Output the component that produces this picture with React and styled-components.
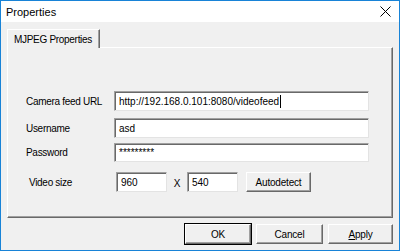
import styled, { createGlobalStyle } from "styled-components";

const Global = createGlobalStyle`
  html, body {
    margin: 0;
    padding: 0;
    background: #ffffff;
  }
  * {
    box-sizing: border-box;
  }
`;

const Window = styled.div`
  width: 400px;
  height: 251px;
  border: 1px solid #1883d7;
  background: #f0f0f0;
  display: flex;
  flex-direction: column;
  font-family: "Liberation Sans", Arial, sans-serif;
  font-size: 10px;
  color: #000;
`;

const TitleBar = styled.div`
  height: 21px;
  background: #ffffff;
  display: flex;
  align-items: center;
  justify-content: space-between;
  padding: 0 8px 0 5px;
`;

const Title = styled.span`
  font-size: 11px;
  color: #000;
`;

const Body = styled.div`
  flex: 1;
  display: flex;
  flex-direction: column;
  padding: 7px 6px 0 6px;
`;

const TabStrip = styled.div`
  display: flex;
  height: 18px;
  position: relative;
  z-index: 1;
`;

const Tab = styled.div`
  height: 19px;
  padding: 0 7px 0 6px;
  display: flex;
  align-items: center;
  background: #f0f0f0;
  border-top: 1px solid #ffffff;
  border-left: 1px solid #ffffff;
  border-right: 1px solid #696969;
  box-shadow: inset -1px 0 0 #a0a0a0;
  letter-spacing: -0.3px;
  white-space: nowrap;
`;

const Panel = styled.div`
  height: 171px;
  border-top: 1px solid #ffffff;
  border-left: 1px solid #ffffff;
  border-right: 1px solid #696969;
  border-bottom: 1px solid #696969;
  box-shadow: inset -1px -1px 0 #a0a0a0;
  display: flex;
  flex-direction: column;
  padding: 0 0 0 18px;
`;

const Row = styled.div`
  display: flex;
  align-items: center;
  margin-top: ${(p) => p.$top}px;
  padding-left: ${(p) => p.$indent || 0}px;
`;

const Label = styled.div`
  width: ${(p) => p.$w}px;
  flex-shrink: 0;
  white-space: nowrap;
  letter-spacing: -0.3px;
`;

const Field = styled.div`
  width: ${(p) => p.$w}px;
  height: ${(p) => p.$h || 20}px;
  flex-shrink: 0;
  background: #ffffff;
  border-top: 1px solid #a0a0a0;
  border-left: 1px solid #a0a0a0;
  border-right: 1px solid #e3e3e3;
  border-bottom: 1px solid #e3e3e3;
  box-shadow: inset 1px 1px 0 #696969;
  display: flex;
  align-items: center;
  padding-left: 4px;
  white-space: nowrap;
`;

const Caret = styled.span`
  display: inline-block;
  width: 1px;
  height: 13px;
  background: #000;
  margin-left: 1px;
`;

const Times = styled.span`
  width: 20px;
  text-align: center;
  margin-top: 3px;
`;

const Button = styled.div`
  width: ${(p) => p.$w}px;
  height: 20px;
  flex-shrink: 0;
  display: flex;
  align-items: center;
  justify-content: center;
  background: #f0f0f0;
  border-top: 1px solid #ffffff;
  border-left: 1px solid #ffffff;
  border-right: 1px solid #696969;
  border-bottom: 1px solid #696969;
  box-shadow: inset -1px -1px 0 #a0a0a0;
  outline: ${(p) => (p.$default ? "1px solid #000" : "none")};
  margin-left: ${(p) => p.$gap || 0}px;
  letter-spacing: -0.2px;
`;

const Footer = styled.div`
  display: flex;
  justify-content: flex-end;
  padding: 6px 0 0 0;
`;

const Close = () => (
  <svg width="11" height="11" viewBox="0 0 11 11">
    <path d="M0.5 0.5 L10.5 10.5 M10.5 0.5 L0.5 10.5" stroke="#000" strokeWidth="1" />
  </svg>
);

export default function App() {
  return (
    <>
      <Global />
      <Window>
        <TitleBar>
          <Title>Properties</Title>
          <Close />
        </TitleBar>
        <Body>
          <TabStrip>
            <Tab>MJPEG Properties</Tab>
          </TabStrip>
          <Panel>
            <Row $top={43}>
              <Label $w={88}>Camera feed URL</Label>
              <Field $w={255}>
                http://192.168.0.101:8080/videofeed
                <Caret />
              </Field>
            </Row>
            <Row $top={7}>
              <Label $w={88}>Username</Label>
              <Field $w={255}>asd</Field>
            </Row>
            <Row $top={5}>
              <Label $w={88}>Password</Label>
              <Field $w={255} $h={19}>
                *********
              </Field>
            </Row>
            <Row $top={10} $indent={3}>
              <Label $w={87}>Video size</Label>
              <Field $w={51}>960</Field>
              <Times>X</Times>
              <Field $w={51}>540</Field>
              <Button $w={65} $gap={8}>
                Autodetect
              </Button>
            </Row>
          </Panel>
          <Footer>
            <Button $w={66} $default>
              OK
            </Button>
            <Button $w={67} $gap={5}>
              Cancel
            </Button>
            <Button $w={65} $gap={5}>
              <span>
                <u>A</u>pply
              </span>
            </Button>
          </Footer>
        </Body>
      </Window>
    </>
  );
}
